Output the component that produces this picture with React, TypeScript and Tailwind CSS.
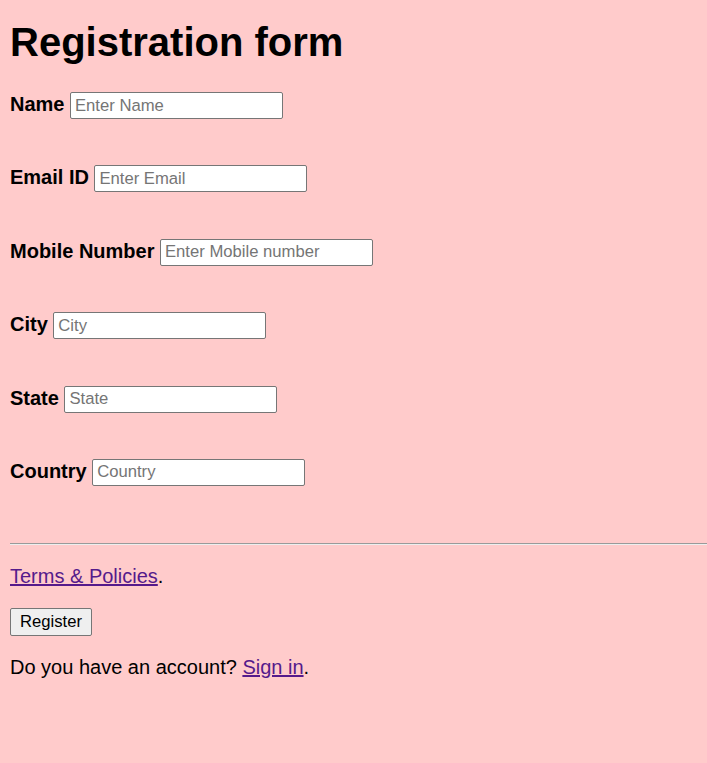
const fields = [
  { label: 'Name', placeholder: 'Enter Name' },
  { label: 'Email ID', placeholder: 'Enter Email' },
  { label: 'Mobile Number', placeholder: 'Enter Mobile number' },
  { label: 'City', placeholder: 'City' },
  { label: 'State', placeholder: 'State' },
  { label: 'Country', placeholder: 'Country' },
];

export default function App() {
  return (
    <div className="min-h-screen overflow-hidden bg-[#ffcbcb] pl-[10px] font-['Liberation_Sans',Arial,sans-serif] text-[20px] text-black">
      <h1 className="mt-[19px] mb-[27px] text-[40px] font-bold leading-[46px]">Registration form</h1>

      <form className="flex flex-col gap-[46.4px]">
        {fields.map((f) => (
          <div key={f.label} className="flex items-start gap-[5.5px]">
            <label className="font-bold leading-[24px]">{f.label}</label>
            <input
              type="text"
              placeholder={f.placeholder}
              className="h-[27px] w-[213px] rounded-[2px] border border-[#767676] bg-white px-[4px] text-[16.67px] leading-[25px] placeholder:text-[#757575] outline-none"
            />
          </div>
        ))}
      </form>

      <hr className="mt-[57px] h-[2px] border-0 border-t border-t-[#9a9a9a] border-b border-b-[#eeeeee]" />

      <p className="mt-[20.5px] leading-[23px]">
        <a href="#" className="text-[#551a8b] underline">Terms &amp; Policies</a>.
      </p>

      <button className="mt-[19.5px] h-[28px] w-[82px] rounded-[2px] border border-[#767676] bg-[#efefef] text-[16.67px] leading-[20px]">
        Register
      </button>

      <p className="mt-[20.5px] leading-[23px]">
        Do you have an account? <a href="#" className="text-[#551a8b] underline">Sign in</a>.
      </p>
    </div>
  );
}
